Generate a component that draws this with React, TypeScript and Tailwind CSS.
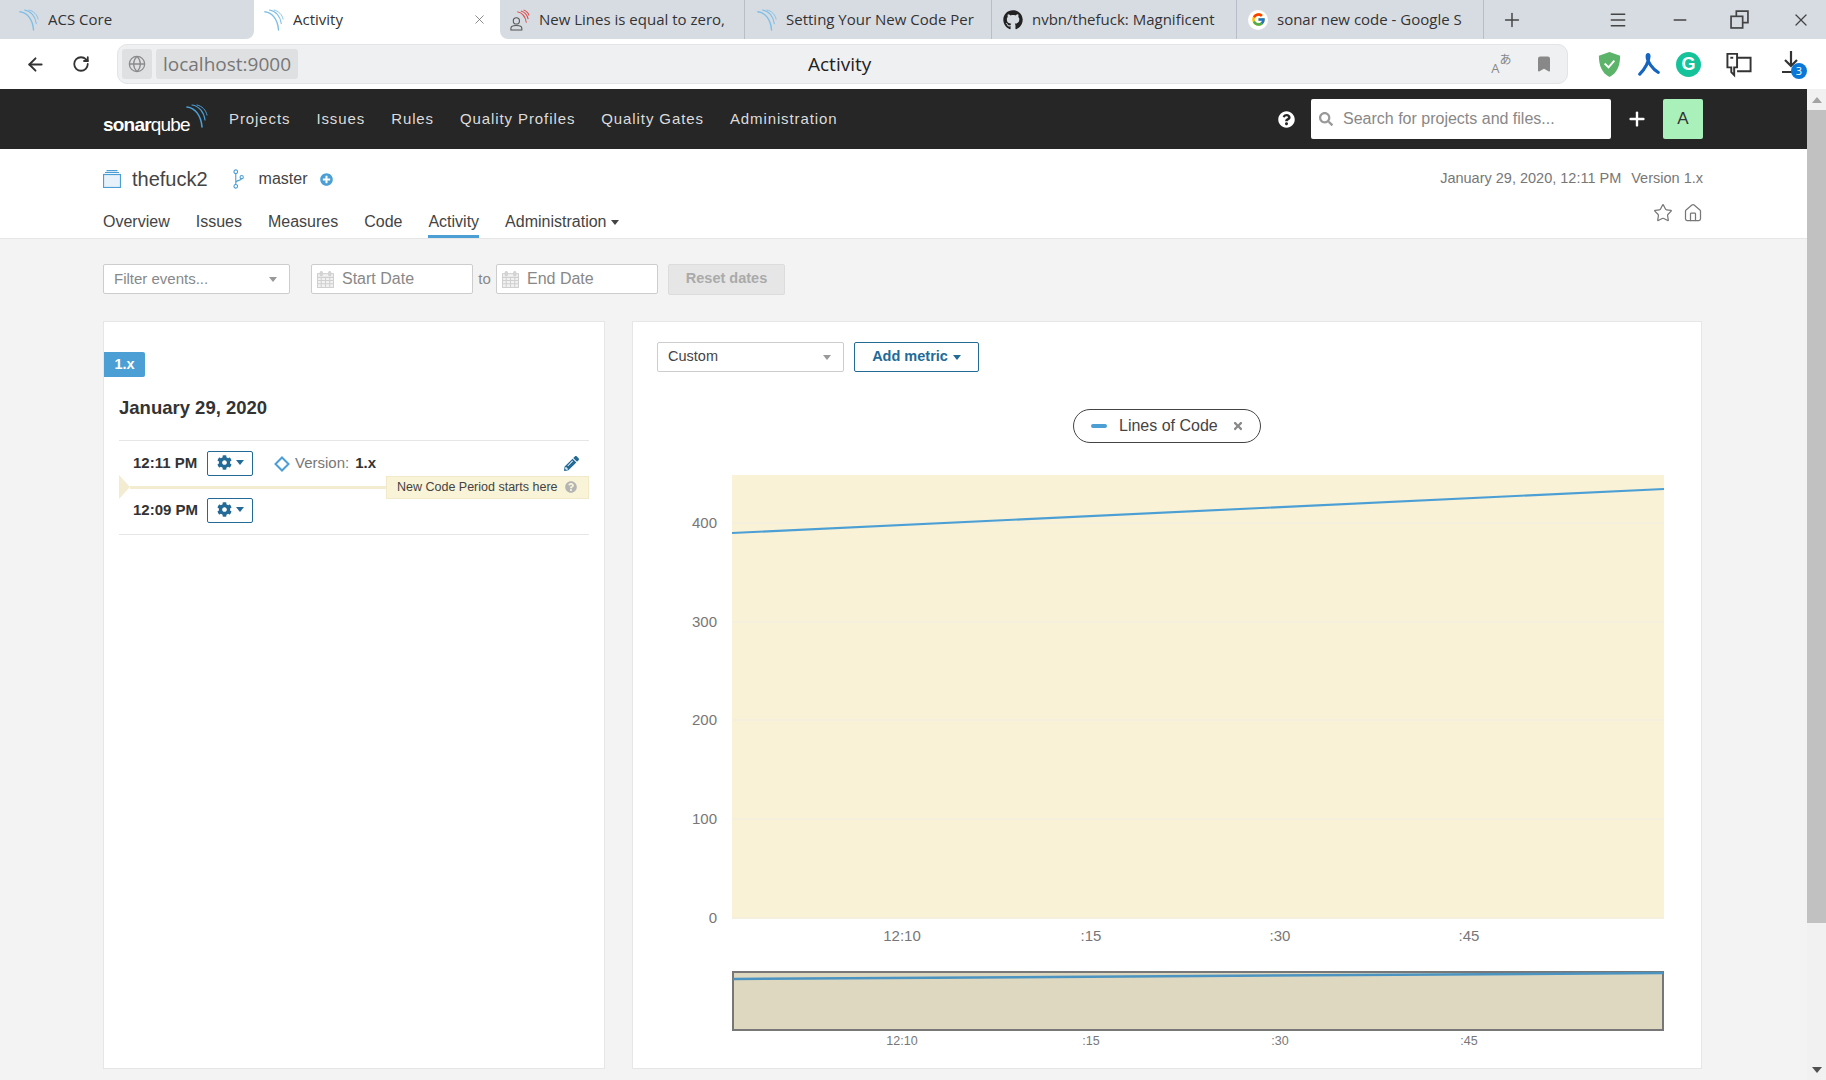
import { ArrowLeft, RotateCw, Star, House, X, Plus, Minus, Menu, Bookmark } from 'lucide-react';
import { FaCog, FaGithub, FaPencilAlt, FaQuestionCircle, FaSearch, FaPlusCircle, FaTimes } from 'react-icons/fa';
import { FcGoogle } from 'react-icons/fc';

function SonarWaves({ className = '', color = '#7fbfe6' }: { className?: string; color?: string }) {
  return (
    <svg viewBox="0 0 22 24" className={className} fill="none" stroke={color} strokeLinecap="round">
      <path d="M1 3c8 1 14 8 15 20" strokeWidth="1.6" />
      <path d="M6 1c7 1 12 7 13 15" strokeWidth="1.2" />
      <path d="M11 1c5 1 9 5 10 10" strokeWidth="1" />
    </svg>
  );
}

function CalendarIcon() {
  return (
    <svg viewBox="0 0 16 16" className="w-[17px] h-[17px] shrink-0" fill="none" stroke="#d0d0d0" strokeWidth="1">
      <rect x="0.5" y="2.5" width="15" height="13" fill="#f2f2f2" />
      <path d="M0.5 6h15M0.5 9h15M0.5 12h15M4 6v9.5M8 6v9.5M12 6v9.5" />
      <rect x="3" y="0.5" width="2" height="4" rx="1" fill="#d8d8d8" />
      <rect x="11" y="0.5" width="2" height="4" rx="1" fill="#d8d8d8" />
    </svg>
  );
}

function GearButton() {
  return (
    <button className="w-[46px] h-[25px] border border-[#236a97] rounded-[2px] bg-white flex items-center justify-center gap-[4px] pb-[2px]">
      <FaCog className="w-[15px] h-[15px] text-[#236a97]" />
      <span className="w-0 h-0 border-x-[4px] border-t-[5px] border-x-transparent border-t-[#236a97]" />
    </button>
  );
}

const tabs = [
  { title: 'ACS Core', width: 'w-[254px]', pad: 'pl-[19px]', icon: <SonarWaves className="w-[20px] h-[22px] shrink-0" />, extra: 'rounded-br-[8px]' },
  { title: 'Activity', width: 'w-[246px]', pad: 'pl-[10px]', icon: <SonarWaves className="w-[20px] h-[22px] shrink-0" />, active: true },
  {
    title: 'New Lines is equal to zero,',
    width: 'w-[245px]',
    pad: 'pl-[10px]',
    extra: 'rounded-bl-[8px] border-r border-r-[#b9bec6]',
    icon: (
      <svg viewBox="0 0 22 24" className="w-[20px] h-[22px] shrink-0" fill="none">
        <circle cx="7" cy="13" r="3.4" stroke="#555" strokeWidth="1.2" />
        <path d="M1 23v-2c0-2 3-3 6-3s6 1 6 3v2z" stroke="#555" strokeWidth="1.2" />
        <path d="M8 3c6 1 9 6 10 12M12 2c4 1 7 4 8 9M15 1c3 1 5 3 6 6" stroke="#d9534f" strokeWidth="1.2" />
      </svg>
    ),
  },
  { title: 'Setting Your New Code Per', width: 'w-[247px]', pad: 'pl-[12px]', extra: 'border-r border-r-[#b9bec6]', icon: <SonarWaves className="w-[20px] h-[22px] shrink-0" /> },
  { title: 'nvbn/thefuck: Magnificent', width: 'w-[245px]', pad: 'pl-[11px]', extra: 'border-r border-r-[#b9bec6]', icon: <FaGithub className="w-[20px] h-[20px] shrink-0 text-[#222]" /> },
  {
    title: 'sonar new code - Google S',
    width: 'w-[247px]',
    pad: 'pl-[11px]',
    extra: 'border-r border-r-[#b9bec6]',
    icon: (
      <span className="w-[20px] h-[20px] shrink-0 rounded-full bg-white flex items-center justify-center">
        <FcGoogle className="w-[15px] h-[15px]" />
      </span>
    ),
  },
];

const navItems = ['Projects', 'Issues', 'Rules', 'Quality Profiles', 'Quality Gates', 'Administration'];
const subTabs = ['Overview', 'Issues', 'Measures', 'Code', 'Activity'];

const yTicks = [
  { label: '400', y: 523 },
  { label: '300', y: 622 },
  { label: '200', y: 720 },
  { label: '100', y: 819 },
  { label: '0', y: 918 },
];
const xTicks = [
  { label: '12:10', x: 902 },
  { label: ':15', x: 1091 },
  { label: ':30', x: 1280 },
  { label: ':45', x: 1469 },
];

export default function App() {
  return (
    <div className="w-[1826px] h-[1080px] overflow-hidden flex flex-col bg-white font-['Liberation_Sans',Arial,sans-serif] text-[#444]">
      {/* browser tabs */}
      <div className="h-[39px] flex shrink-0 font-['Open_Sans',sans-serif] text-[15px] text-[#333]">
        {tabs.map((t) => (
          <div
            key={t.title}
            className={`${t.width} ${t.pad} ${t.active ? 'bg-white rounded-t-[10px]' : 'bg-[#d7dce3]'} ${t.extra ?? ''} h-full flex items-center gap-[9px] shrink-0 overflow-hidden whitespace-nowrap`}
          >
            {t.icon}
            <span className="flex-1 overflow-hidden">{t.title}</span>
            {t.active && <X className="w-[15px] h-[15px] mr-[13px] text-[#666]" strokeWidth={1.2} />}
          </div>
        ))}
        <div className="flex-1 bg-[#d7dce3] flex items-center text-[#444]">
          <Plus className="w-[22px] h-[22px] ml-[17px]" strokeWidth={1.6} />
          <Menu className="w-[20px] h-[20px] ml-[85px]" strokeWidth={1.8} />
          <Minus className="w-[20px] h-[20px] ml-[42px]" strokeWidth={1.6} />
          <svg viewBox="0 0 18 18" className="w-[19px] h-[19px] ml-[40px]" fill="none" stroke="#444" strokeWidth="1.6">
            <rect x="1" y="6" width="11" height="11" />
            <path d="M6 6V1h11v11h-5" />
          </svg>
          <X className="w-[20px] h-[20px] ml-[42px]" strokeWidth={1.5} />
        </div>
      </div>

      {/* address bar */}
      <div className="h-[50px] flex items-center shrink-0 bg-white">
        <ArrowLeft className="w-[21px] h-[21px] ml-[25px] text-[#333]" strokeWidth={2.2} />
        <RotateCw className="w-[18px] h-[18px] ml-[26px] text-[#333]" strokeWidth={2.4} />
        <div className="w-[1451px] h-[40px] ml-[27px] rounded-[10px] bg-[#eff0f2] border border-[#e3e4e6] flex items-center pl-[4px] font-['Open_Sans',sans-serif]">
          <div className="w-[30px] h-[30px] rounded-[3px] bg-[#dfe0e2] flex items-center justify-center">
            <svg viewBox="0 0 20 20" className="w-[18px] h-[18px]" fill="none" stroke="#8a8a8a" strokeWidth="1.4">
              <circle cx="10" cy="10" r="8.5" />
              <path d="M1.5 10h17M10 1.5c-5 5-5 12 0 17M10 1.5c5 5 5 12 0 17" />
            </svg>
          </div>
          <div className="w-[142px] h-[30px] ml-[4px] rounded-[3px] bg-[#dfe0e2] flex items-center justify-center text-[19px] text-[#777]">localhost:9000</div>
          <span className="ml-[510px] text-[19px] text-[#222]">Activity</span>
          <span className="ml-[620px] w-[22px] h-[22px] flex items-start text-[#888] leading-none">
            <span className="text-[13px] mt-[9px]">A</span>
            <span className="text-[12px] font-['Noto_Sans_CJK_JP',sans-serif]">あ</span>
          </span>
          <Bookmark className="w-[18px] h-[18px] ml-[22px] text-[#888]" fill="#888" />
        </div>
        <svg viewBox="0 0 24 28" className="w-[25px] h-[27px] ml-[29px]">
          <path d="M12 1l11 4c0 10-3 18-11 22C4 23 1 15 1 5z" fill="#5cb46a" />
          <path d="M7 13l4 4 6-7" fill="none" stroke="#fff" strokeWidth="2" />
        </svg>
        <svg viewBox="0 0 24 26" className="w-[24px] h-[24px] ml-[15px]" fill="none" stroke="#1565c0" strokeWidth="3.4" strokeLinecap="round">
          <path d="M2 24C8 18 12 10 12 5c0-3-2-3-2 0 0 5 6 14 12 17" />
        </svg>
        <div className="w-[25px] h-[25px] ml-[15px] rounded-full bg-[#15c39a] flex items-center justify-center text-white font-bold text-[18px] leading-none">G</div>
        <svg viewBox="0 0 28 28" className="w-[28px] h-[27px] ml-[24px]" fill="none" stroke="#333" strokeWidth="2">
          <path d="M2 3h10v14H9v8l-3-3V17H2z" />
          <path d="M12 7h14v14H12" />
          <path d="M5 7h3" />
        </svg>
        <div className="relative ml-[26px] w-[28px] h-[30px]">
          <svg viewBox="0 0 24 26" className="w-[24px] h-[26px]" fill="none" stroke="#333" strokeWidth="2.2">
            <path d="M12 2v15M6 11l6 6 6-6M3 23h13" />
          </svg>
          <span className="absolute right-0 bottom-0 w-[16px] h-[16px] rounded-full bg-[#0a78d8] text-white text-[11px] leading-[16px] text-center font-['Open_Sans',sans-serif]">3</span>
        </div>
      </div>

      <div className="flex-1 flex min-h-0">
        <div className="flex-1 flex flex-col min-w-0 bg-[#f3f3f3]">
          {/* global nav */}
          <div className="h-[60px] bg-[#262626] flex items-center pl-[103px] pr-[104px] shrink-0">
            <div className="flex items-end w-[126px] text-white text-[19px] leading-none tracking-[-0.8px]">
              <span className="font-bold mb-[2px]">sonar</span>
              <span className="mb-[2px]">qube</span>
              <SonarWaves className="w-[22px] h-[26px] ml-[-4px] mb-[7px]" color="#4b9fd5" />
            </div>
            <div className="flex gap-[26px] text-[15px] tracking-[0.9px] text-[#dcdcdc]">
              {navItems.map((n) => (
                <span key={n}>{n}</span>
              ))}
            </div>
            <FaQuestionCircle className="w-[17px] h-[17px] text-white ml-auto mr-[16px]" />
            <div className="w-[300px] h-[40px] bg-white rounded-[2px] flex items-center pl-[8px] text-[16px] text-[#888]">
              <FaSearch className="w-[14px] h-[14px] text-[#999] mr-[10px]" />
              Search for projects and files...
            </div>
            <Plus className="w-[22px] h-[22px] text-white ml-[15px]" strokeWidth={2.6} />
            <div className="w-[40px] h-[40px] ml-[15px] rounded-[2px] bg-[#aaf0bb] flex items-center justify-center text-[17px] text-[#333]">A</div>
          </div>

          {/* component header */}
          <div className="h-[90px] bg-white border-b border-[#e6e6e6] px-[103px] pr-[104px] shrink-0">
            <div className="h-[28px] mt-[16px] flex items-center">
              <svg viewBox="0 0 18 18" className="w-[18px] h-[18px]" fill="none" stroke="#4b9fd5">
                <rect x="0.5" y="4.5" width="17" height="13" strokeWidth="1.2" fill="#e6f1f9" />
                <path d="M2 2.5h14M3.5 0.7h11" strokeWidth="1.2" />
              </svg>
              <span className="ml-[11px] text-[20px] text-[#444]">thefuck2</span>
              <svg viewBox="0 0 12 22" className="w-[11px] h-[20px] ml-[25px]" fill="none" stroke="#4b9fd5" strokeWidth="1.2">
                <circle cx="3" cy="3" r="2" />
                <circle cx="3" cy="19" r="2" />
                <circle cx="9.5" cy="9" r="1.8" />
                <path d="M3 5v12M3 15c0-3 6-2 6.500-4.500" />
              </svg>
              <span className="ml-[15px] text-[16px]">master</span>
              <FaPlusCircle className="w-[13px] h-[13px] ml-[12px] text-[#4b9fd5]" />
              <span className="ml-auto text-[14.500px] text-[#777]">January 29, 2020, 12:11 PM</span>
              <span className="ml-[10px] text-[14.500px] text-[#777]">Version 1.x</span>
            </div>
            <div className="h-[45px] flex justify-between">
              <div className="flex gap-[26px] text-[16px] leading-[22px]">
                {subTabs.map((s) => (
                  <div key={s} className={`pt-[18px] h-[45px] ${s === 'Activity' ? 'border-b-[3px] border-[#4b9fd5]' : ''}`}>
                    {s}
                  </div>
                ))}
                <div className="pt-[18px] flex items-start gap-[5px]">
                  Administration
                  <span className="mt-[9px] w-0 h-0 border-x-[4.500px] border-t-[5px] border-x-transparent border-t-[#444]" />
                </div>
              </div>
              <div className="flex gap-[10px] mt-[10px] text-[#777]">
                <Star className="w-[20px] h-[20px]" strokeWidth={1.5} />
                <House className="w-[20px] h-[20px]" strokeWidth={1.5} />
              </div>
            </div>
          </div>

          {/* page content */}
          <div className="flex-1 px-[103px] pt-[25px] min-h-0">
            <div className="h-[30px] flex items-center text-[16px] text-[#888]">
              <div className="w-[187px] h-full bg-white border border-[#cdcdcd] rounded-[2px] flex items-center pl-[10px] pr-[12px] text-[15px] justify-between">
                Filter events...
                <span className="w-0 h-0 border-x-[4.500px] border-t-[5px] border-x-transparent border-t-[#999]" />
              </div>
              <div className="w-[162px] h-full ml-[21px] bg-white border border-[#cdcdcd] rounded-[2px] flex items-center pl-[5px] gap-[8px]">
                <CalendarIcon />
                Start Date
              </div>
              <span className="w-[23px] text-center text-[15px]">to</span>
              <div className="w-[162px] h-full bg-white border border-[#cdcdcd] rounded-[2px] flex items-center pl-[5px] gap-[8px]">
                <CalendarIcon />
                End Date
              </div>
              <div className="w-[117px] h-[31px] ml-[10px] bg-[#e6e6e6] border border-[#dcdcdc] rounded-[2px] flex items-center justify-center text-[14.500px] font-bold text-[#aaa]">Reset dates</div>
            </div>

            <div className="flex gap-[27px] mt-[27px]">
              {/* history */}
              <div className="w-[502px] h-[748px] bg-white border border-[#e6e6e6] pt-[30px]">
                <div className="w-[41px] h-[25px] bg-[#4b9fd5] rounded-r-[2px] flex items-center justify-center text-white font-bold text-[14.500px]">1.x</div>
                <div className="px-[15px]">
                  <div className="mt-[20px] text-[18.500px] leading-[22px] font-bold text-[#333]">January 29, 2020</div>
                  <div className="mt-[21px] border-y border-[#e6e6e6] py-[10px] h-[95px]">
                    <div className="h-[25px] flex items-center pl-[14px] pr-[10px]">
                      <span className="w-[74px] text-[15px] font-bold text-[#333]">12:11 PM</span>
                      <GearButton />
                      <svg viewBox="0 0 16 16" className="w-[16px] h-[16px] ml-[21px]" fill="none" stroke="#4b9fd5" strokeWidth="2">
                        <path d="M8 1.500L14.500 8 8 14.500 1.500 8z" />
                      </svg>
                      <span className="ml-[5px] text-[15px] text-[#777]">Version:</span>
                      <span className="ml-[6px] text-[15px] font-bold text-[#333]">1.x</span>
                      <FaPencilAlt className="w-[15px] h-[15px] ml-auto text-[#236a97]" />
                    </div>
                    <div className="h-[22px] flex items-center">
                      <span className="w-0 h-0 border-y-[12.500px] border-l-[11px] border-y-transparent border-l-[#f4ecd0] shrink-0" />
                      <span className="flex-1 h-[3px] bg-[#f4ecd0]" />
                      <span className="w-[203px] h-[23px] bg-[#f9f3d7] border border-[#f2e9c8] flex items-center pl-[10px] text-[12.500px] text-[#444] shrink-0">
                        New Code Period starts here
                        <FaQuestionCircle className="w-[12px] h-[12px] ml-[7px] text-[#b4b4b4]" />
                      </span>
                    </div>
                    <div className="h-[25px] flex items-center pl-[14px]">
                      <span className="w-[74px] text-[15px] font-bold text-[#333]">12:09 PM</span>
                      <GearButton />
                    </div>
                  </div>
                </div>
              </div>

              {/* graph */}
              <div className="w-[1070px] h-[748px] bg-white border border-[#e6e6e6] pt-[20px] pl-[24px]">
                <div className="h-[30px] flex gap-[10px] text-[14.500px]">
                  <div className="w-[187px] h-full border border-[#cdcdcd] rounded-[2px] flex items-center justify-between pl-[10px] pr-[12px]">
                    Custom
                    <span className="w-0 h-0 border-x-[4.500px] border-t-[5px] border-x-transparent border-t-[#999]" />
                  </div>
                  <div className="w-[125px] h-full border border-[#236a97] rounded-[2px] flex items-center justify-center gap-[5px] font-bold text-[#236a97]">
                    Add metric
                    <span className="w-0 h-0 border-x-[4.500px] border-t-[5px] border-x-transparent border-t-[#236a97]" />
                  </div>
                </div>
                <div className="w-[1020px] mt-[37px] flex justify-center">
                  <div className="w-[188px] h-[34px] border border-[#444] rounded-[17px] flex items-center pl-[17px] text-[16px]">
                    <span className="w-[16px] h-[4px] rounded-[2px] bg-[#4b9fd5]" />
                    <span className="ml-[12px]">Lines of Code</span>
                    <FaTimes className="w-[12px] h-[12px] ml-[14px] text-[#888]" />
                  </div>
                </div>
                <svg viewBox="672 460 1000 600" className="w-[1000px] h-[600px] ml-[15px] mt-[17px] block">
                  <rect x="732" y="475" width="932" height="444" fill="#f9f2d6" />
                  {yTicks.map((t) => (
                    <g key={t.label}>
                      <line x1="732" x2="1664" y1={t.y} y2={t.y} stroke="#f3eee0" strokeWidth="1.5" />
                      <text x="717" y={t.y + 5} textAnchor="end" fontSize="15" fill="#777">{t.label}</text>
                    </g>
                  ))}
                  <line x1="732" x2="1664" y1="533" y2="489" stroke="#4b9fd5" strokeWidth="2.2" />
                  {xTicks.map((t) => (
                    <text key={t.label} x={t.x} y="941" textAnchor="middle" fontSize="15" fill="#777">{t.label}</text>
                  ))}
                  <rect x="733" y="972" width="930" height="58" fill="#dfd8c0" stroke="#777" strokeWidth="2" />
                  <line x1="733" x2="1663" y1="979" y2="973" stroke="#4b93c0" strokeWidth="2.5" />
                  {xTicks.map((t) => (
                    <text key={t.label} x={t.x} y="1045" textAnchor="middle" fontSize="12.500" fill="#777">{t.label}</text>
                  ))}
                </svg>
              </div>
            </div>
          </div>
        </div>

        {/* page scrollbar */}
        <div className="w-[19px] bg-[#f1f1f1] flex flex-col items-center shrink-0">
          <div className="h-[21px] flex items-center justify-center">
            <span className="w-0 h-0 border-x-[5px] border-b-[6px] border-x-transparent border-b-[#a3a3a3]" />
          </div>
          <div className="w-full h-[813px] bg-[#c1c1c1]" />
          <div className="flex-1" />
          <div className="h-[21px] flex items-center justify-center">
            <span className="w-0 h-0 border-x-[5px] border-t-[6px] border-x-transparent border-t-[#505050]" />
          </div>
        </div>
      </div>
    </div>
  );
}
